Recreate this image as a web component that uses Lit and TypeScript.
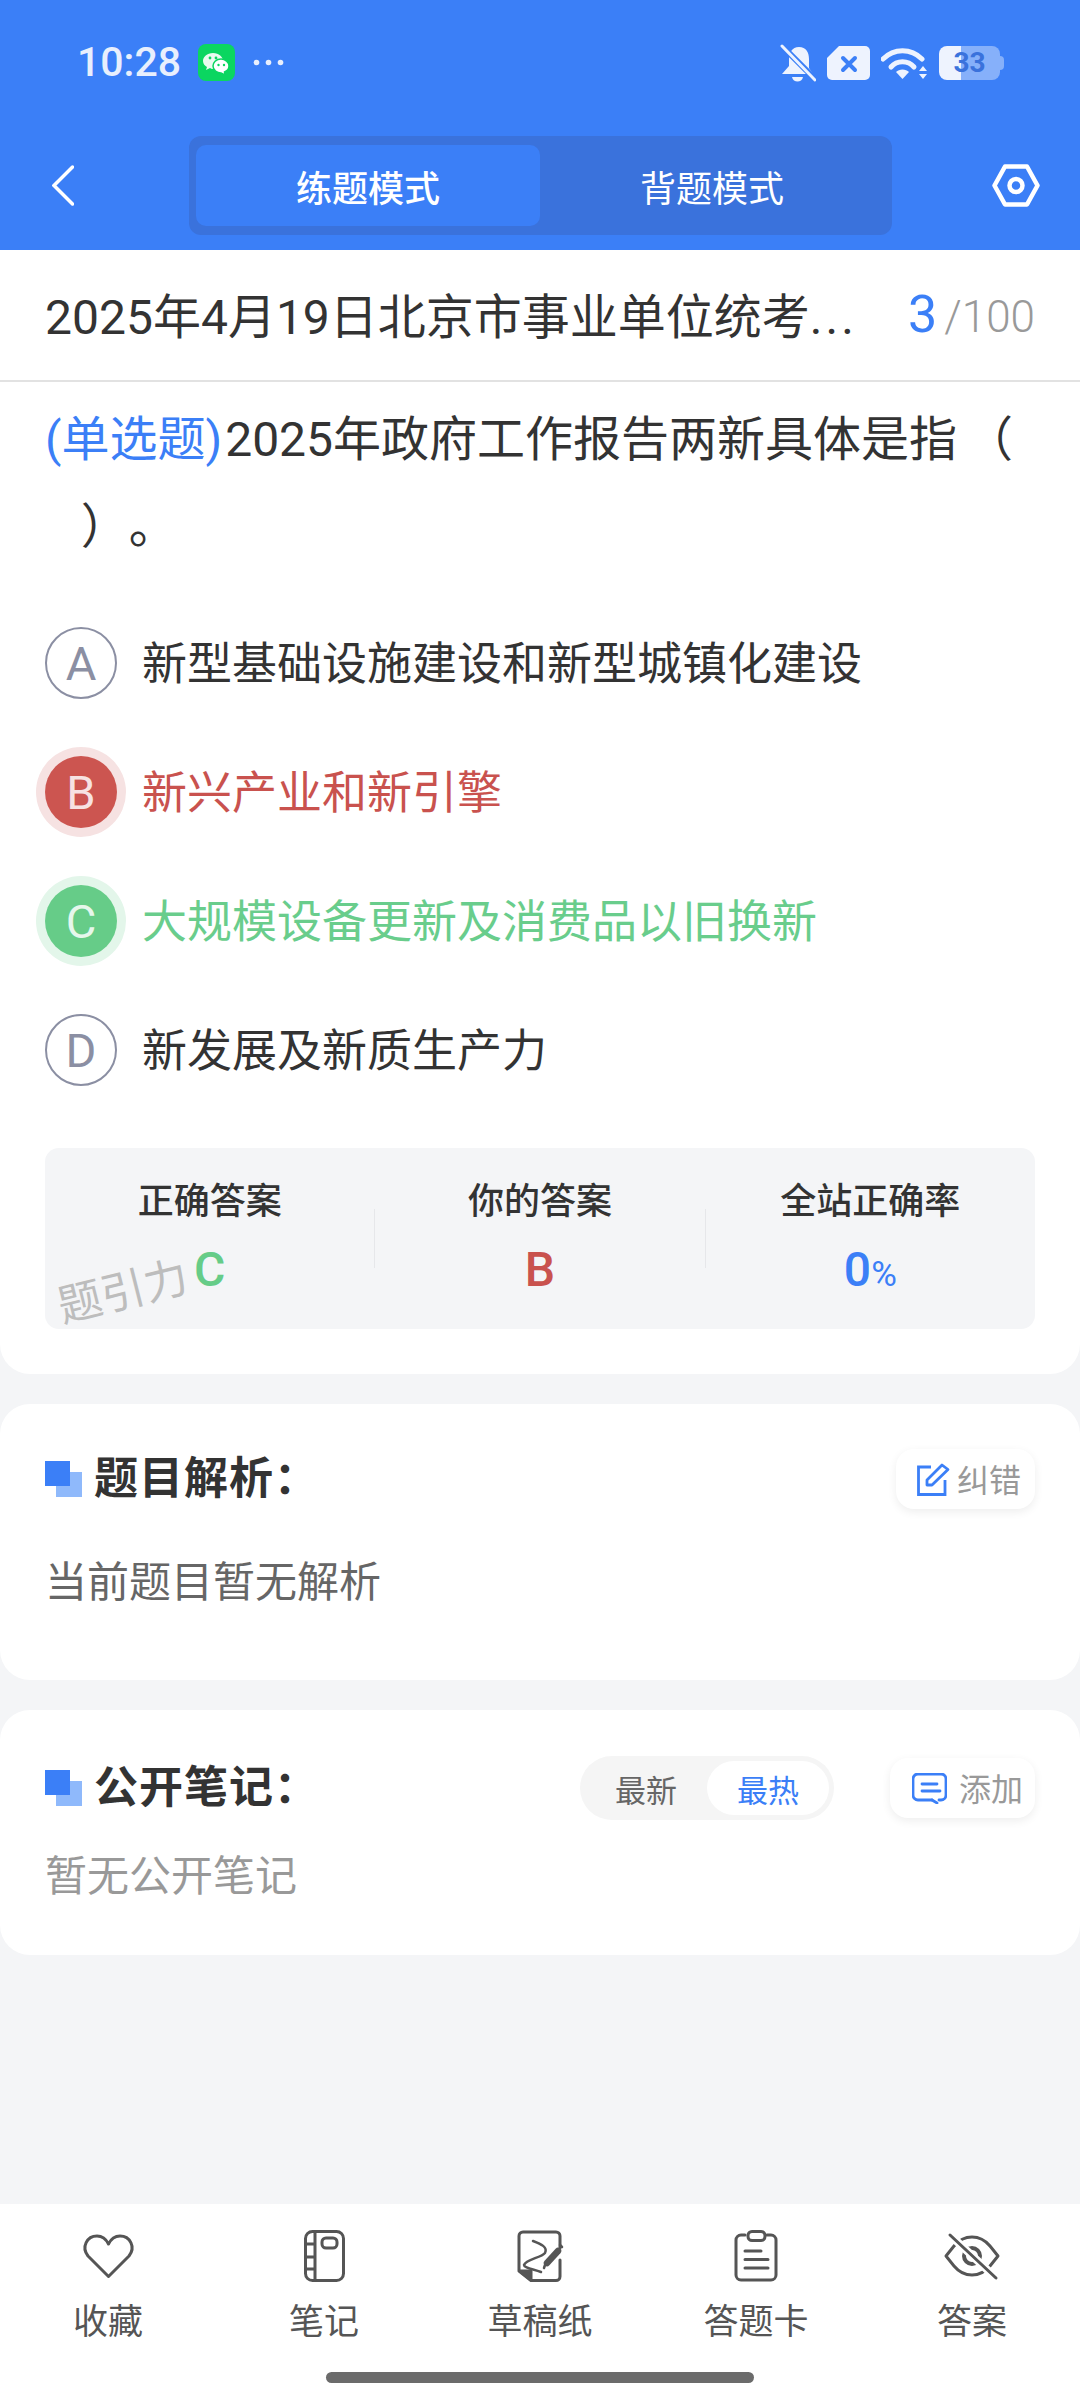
import { LitElement, css, html, svg } from 'lit';
import { customElement } from 'lit/decorators.js';

const options = [
  { key: 'A', text: '新型基础设施建设和新型城镇化建设', state: '' },
  { key: 'B', text: '新兴产业和新引擎', state: 'wrong' },
  { key: 'C', text: '大规模设备更新及消费品以旧换新', state: 'right' },
  { key: 'D', text: '新发展及新质生产力', state: '' },
];

const squares = html`<svg class="squares" width="37" height="36" viewBox="0 0 37 36">
  <rect x="11" y="11" width="26" height="25" fill="#8fb9fb"></rect>
  <rect x="0" y="0" width="25" height="25" fill="#3b7ff7"></rect>
</svg>`;

const tools = [
  {
    label: '收藏',
    w: 51,
    h: 45,
    icon: svg`<path d="M25.5 42.5 L5 22 C-2 13 4 2 14 2 C19 2 23 5 25.5 10 C28 5 32 2 37 2 C47 2 53 13 46 22 Z" />`,
  },
  {
    label: '笔记',
    w: 41,
    h: 52,
    icon: svg`<rect x="1.5" y="1.5" width="38" height="49" rx="7" />
      <path d="M11 2 V50 M2 14 H11 M2 27 H11 M2 39 H11" />
      <rect x="18" y="8" width="15" height="10" rx="4" />`,
  },
  {
    label: '草稿纸',
    w: 46,
    h: 52,
    icon: svg`<path d="M43 18 V6 a4 4 0 0 0 -4 -4 H6 a4 4 0 0 0 -4 4 V41 L14 50.5 H39 a4 4 0 0 0 4 -4 V30" />
      <path d="M3 41 H14 V50 Z" fill="#555" />
      <path stroke-width="2.5" d="M16 11 C24 14 31 17 28 23 C24 28 9 29 7 35 C7 38 16 39 24 42" />
      <path stroke-width="6.5" d="M30 33 L41 21" />
      <path stroke-width="2.5" d="M27 38 L28 35 M43 15 L45 17" />`,
  },
  {
    label: '答题卡',
    w: 44,
    h: 52,
    icon: svg`<path d="M11 5 H7 a5 5 0 0 0 -5 5 V45 a5 5 0 0 0 5 5 H37 a5 5 0 0 0 5 -5 V10 a5 5 0 0 0 -5 -5 H33" />
      <rect x="14" y="1.5" width="17" height="9" rx="4" />
      <path d="M11 21 H27 M11 29.5 H34 M11 38 H34" />`,
  },
  {
    label: '答案',
    w: 56,
    h: 45,
    icon: svg`<path d="M2 22 L10 12 C20 0 36 0 46 12 L54 22 L46 32 C36 44 20 44 10 32 Z" />
      <circle cx="28" cy="22" r="8" stroke-width="4" />
      <path d="M6 1 L52 44" stroke="#fff" stroke-width="8" />
      <path d="M6 1 L52 44" />`,
  },
];

@customElement('app-root')
export class AppRoot extends LitElement {
  static styles = css`
    :host {
      display: block;
      width: 1080px;
      height: 2400px;
      overflow: hidden;
      font-family: Roboto, 'Noto Sans CJK SC', sans-serif;
      color: #333;
    }
    .page {
      display: flex;
      flex-direction: column;
      height: 2400px;
      background: #f4f5f7;
    }
    .header {
      background: #3b7ff7;
      height: 250px;
      color: #fff;
    }
    .status {
      display: flex;
      align-items: center;
      justify-content: space-between;
      height: 124px;
      padding: 0 76px 0 77px;
    }
    .status-left {
      display: flex;
      align-items: center;
    }
    .time {
      font-size: 41px;
      font-weight: 500;
      color: #e8effd;
      margin-right: 17px;
    }
    .dots {
      margin-left: 18px;
    }
    .status-right {
      display: flex;
      align-items: center;
      gap: 11px;
      margin-top: 2px;
    }
    .battery {
      display: flex;
      align-items: center;
      justify-content: center;
      position: relative;
      width: 61px;
      height: 34px;
      margin-right: 4px;
      border-radius: 8px;
      background: linear-gradient(90deg, #eef3fe 22px, #86b0fa 22px);
      color: #3a72dc;
      font-size: 28px;
      font-weight: 700;
      line-height: 34px;
    }
    .battery::after {
      content: '';
      position: absolute;
      right: -4px;
      top: 10px;
      width: 4px;
      height: 14px;
      border-radius: 0 4px 4px 0;
      background: #86b0fa;
    }
    .nav {
      display: flex;
      align-items: center;
      height: 123px;
      padding: 0 0 3px 52px;
    }
    .tabs {
      display: flex;
      width: 703px;
      height: 99px;
      box-sizing: border-box;
      margin-left: 115px;
      margin-right: 100px;
      padding: 9px 8px 9px 7px;
      border-radius: 12px;
      background: #3a72dc;
    }
    .tab {
      flex: 1;
      display: flex;
      align-items: center;
      justify-content: center;
      border-radius: 10px;
      font-size: 36px;
    }
    .tab.on {
      background: #3b7ff7;
      font-weight: 500;
    }
    .card {
      background: #fff;
      border-radius: 30px;
      margin-bottom: 30px;
    }
    .main {
      border-radius: 0 0 30px 30px;
      padding-bottom: 45px;
    }
    .title-row {
      display: flex;
      align-items: center;
      justify-content: space-between;
      box-sizing: border-box;
      height: 132px;
      padding: 0 45px 4px;
      border-bottom: 2px solid #e2e2e2;
    }
    .title {
      font-size: 48px;
      white-space: nowrap;
    }
    .title i {
      font-style: normal;
      letter-spacing: 3px;
    }
    .count {
      color: #999;
      font-size: 44px;
      font-weight: 300;
      padding-top: 2px;
    }
    .count b {
      color: #3b7ff7;
      font-size: 52px;
      font-weight: 400;
      margin-right: 7px;
    }
    .question {
      margin: 0;
      padding: 14px 45px 0;
      font-size: 48px;
      line-height: 87px;
      text-spacing-trim: space-all;
    }
    .question span {
      color: #3b7ff7;
      margin-right: 3px;
    }
    .question i {
      font-style: normal;
      margin-left: 8px;
    }
    .options {
      display: flex;
      flex-direction: column;
      gap: 57px;
      padding: 57px 45px 0;
    }
    .option {
      display: flex;
      align-items: center;
      gap: 25px;
      font-size: 45px;
      height: 72px;
    }
    .option-text {
      margin-bottom: 6px;
    }
    .letter {
      display: flex;
      align-items: center;
      justify-content: center;
      box-sizing: border-box;
      width: 72px;
      height: 72px;
      border: 2px solid #8b8fa3;
      border-radius: 50%;
      color: #8b8fa3;
      font-size: 47px;
      font-weight: 400;
    }
    .wrong {
      color: #c9524e;
    }
    .wrong .letter {
      background: #cc5550;
      border: 0;
      color: #f7e2e2;
      box-shadow: 0 0 0 9px #f6e2e2;
    }
    .right {
      color: #69cd8c;
    }
    .right .letter {
      background: #66cc88;
      border: 0;
      color: #e6f7ec;
      box-shadow: 0 0 0 9px #e3f6ea;
    }
    .stats {
      display: flex;
      align-items: center;
      position: relative;
      height: 181px;
      margin: 62px 45px 0;
      border-radius: 14px;
      background: #f4f5f7;
    }
    .stat {
      flex: 1;
      align-self: flex-start;
      text-align: center;
      padding-top: 32px;
    }
    .stat-label {
      font-size: 36px;
      font-weight: 500;
      line-height: 44px;
    }
    .stat-value {
      margin-top: 22px;
      font-size: 48px;
      font-weight: 500;
      line-height: 48px;
    }
    .stat-value small {
      font-size: 35px;
      font-weight: 400;
    }
    .green {
      color: #66cc88;
    }
    .red {
      color: #c9524e;
    }
    .blue {
      color: #3b7ff7;
    }
    .sep {
      width: 1px;
      height: 59px;
      background: #e6e7ea;
    }
    .mark {
      position: absolute;
      left: 12px;
      top: 116px;
      color: #bdbdbd;
      font-size: 44px;
      line-height: 56px;
      transform: rotate(-14deg);
    }
    .analysis {
      padding: 45px 45px 67px;
    }
    .notes {
      padding: 46px 45px 48px;
    }
    .head {
      display: flex;
      align-items: center;
    }
    .head h3 {
      margin: 0 auto 0 12px;
      font-size: 44px;
      font-weight: 700;
      line-height: 56px;
      letter-spacing: 1px;
    }
    .squares {
      flex: none;
    }
    .btn {
      display: flex;
      align-items: center;
      height: 60px;
      border-radius: 18px;
      background: #fff;
      box-shadow: 0 3px 10px rgba(0, 0, 0, 0.07);
      color: #999;
      font-size: 32px;
    }
    .btn span {
      margin-bottom: 3px;
    }
    .fix {
      gap: 7px;
      padding: 0 14px 0 21px;
    }
    .add {
      gap: 12px;
      padding: 0 12px 0 22px;
      margin-left: 56px;
    }
    .seg {
      display: flex;
      padding: 5px;
      border-radius: 32px;
      background: #f5f5f5;
    }
    .seg div {
      display: flex;
      align-items: center;
      justify-content: center;
      width: 122px;
      height: 54px;
      border-radius: 27px;
      color: #666;
      font-size: 31px;
    }
    .seg .on {
      background: #fff;
      color: #3b7ff7;
    }
    .body-text {
      margin: 44px 0 0;
      color: #666;
      font-size: 42px;
      line-height: 60px;
    }
    .empty {
      margin: 27px 0 0;
      color: #999;
      font-size: 42px;
      line-height: 60px;
    }
    .footer {
      margin-top: auto;
      height: 196px;
      box-sizing: border-box;
      padding-top: 25px;
      background: #fff;
    }
    .tools {
      display: grid;
      grid-template-columns: repeat(5, 1fr);
    }
    .tool {
      display: flex;
      flex-direction: column;
      align-items: center;
      color: #555;
      font-size: 35px;
      line-height: 44px;
    }
    .tool-icon {
      display: flex;
      align-items: center;
      justify-content: center;
      height: 54px;
      margin-bottom: 18px;
    }
    .tool-icon svg {
      fill: none;
      stroke: #555;
      stroke-width: 3;
      stroke-linecap: round;
      stroke-linejoin: round;
      overflow: visible;
    }
    .home {
      width: 428px;
      height: 11px;
      margin: 27px auto 0;
      border-radius: 6px;
      background: #6b6b6b;
    }
  `;

  render() {
    return html`
      <div class="page">
        <div class="header">
          <div class="status">
            <div class="status-left">
              <span class="time">10:28</span>
              <svg width="37" height="37" viewBox="0 0 37 37">
                <rect width="37" height="37" rx="8" fill="#0bd660"></rect>
                <path d="M15 9 C9 9 5 13 5 17 C5 20 7 22 9 23 L8 26 L12 24 C13 25 15 25 16 25 C20 25 25 21 25 17 C25 13 21 9 15 9Z" fill="#eafbf0"></path>
                <path d="M23 15 C18 15 15 18.500 15 22 C15 26 19 29 23 29 L27 31 L26.500 28 C29 27 31 25 31 22 C31 18.500 27.500 15 23 15Z" fill="#fff" stroke="#0bd660" stroke-width="1.500"></path>
                <circle cx="12" cy="14" r="1.400" fill="#0bd660"></circle>
                <circle cx="18" cy="14" r="1.400" fill="#0bd660"></circle>
                <circle cx="20.500" cy="21" r="1.200" fill="#0bd660"></circle>
                <circle cx="26" cy="21" r="1.200" fill="#0bd660"></circle>
              </svg>
              <svg class="dots" width="31" height="7" viewBox="0 0 31 7" fill="#e8effd">
                <circle cx="3.500" cy="3.500" r="2.800"></circle>
                <circle cx="15.500" cy="3.500" r="2.800"></circle>
                <circle cx="27.500" cy="3.500" r="2.800"></circle>
              </svg>
            </div>
            <div class="status-right">
              <svg width="36" height="39" viewBox="0 0 36 39" fill="#eef3fe">
                <path d="M19 3 C12 3 9 9 9 15 V22 L2 30 H33 L29 24 V15 C29 8 26 3 19 3Z"></path>
                <path d="M12 33 H23 C22 39 13 39 12 33Z"></path>
                <path d="M1 1 L35 35" stroke="#3b7ff7" stroke-width="6"></path>
                <path d="M2 2 L35 36" stroke="#eef3fe" stroke-width="3" stroke-linecap="round"></path>
              </svg>
              <svg width="43" height="34" viewBox="0 0 43 34">
                <path d="M12 0 H38 a5 5 0 0 1 5 5 V29 a5 5 0 0 1 -5 5 H5 a5 5 0 0 1 -5 -5 V12Z" fill="#eef3fe"></path>
                <path d="M16 12 L28 24 M28 12 L16 24" stroke="#3b7ff7" stroke-width="4" stroke-linecap="round"></path>
              </svg>
              <svg width="47" height="33" viewBox="0 0 47 33" fill="#eef3fe">
                <path d="M2 12 C13 1 30 1 41 12" fill="none" stroke="#eef3fe" stroke-width="5" stroke-linecap="round"></path>
                <path d="M10 20 C16 13 27 13 33 20" fill="none" stroke="#eef3fe" stroke-width="5" stroke-linecap="round"></path>
                <path d="M15 25 C18 21.500 25 21.500 28 25 L21.500 32Z"></path>
                <path d="M38 24 L42 19 L46 24Z M38 27 H46 L42 32Z"></path>
              </svg>
              <div class="battery">33</div>
            </div>
          </div>
          <div class="nav">
            <svg width="22" height="41" viewBox="0 0 22 41" fill="none" stroke="#fff" stroke-width="3.500" stroke-linecap="round">
              <path d="M20.500 2 L2 20.500 L20.500 39"></path>
            </svg>
            <div class="tabs">
              <div class="tab on">练题模式</div>
              <div class="tab">背题模式</div>
            </div>
            <svg width="48" height="43" viewBox="0 0 48 43" fill="none" stroke="#fff" stroke-width="4.500" stroke-linejoin="round">
              <path d="M13 2.500 H35 L45.500 21.500 L35 40.500 H13 L2.500 21.500Z"></path>
              <circle cx="24" cy="21.500" r="6.500"></circle>
            </svg>
          </div>
        </div>

        <div class="card main">
          <div class="title-row">
            <div class="title">2025年4月19日北京市事业单位统考<i>...</i></div>
            <div class="count"><b>3</b>/100</div>
          </div>
          <p class="question">
            <span>(单选题)</span>2025年政府工作报告两新具体是指<i>（</i><br />&nbsp;&nbsp;&nbsp;）。
          </p>
          <div class="options">
            ${options.map(
              (o) => html`<div class="option ${o.state}">
                <div class="letter">${o.key}</div>
                <div class="option-text">${o.text}</div>
              </div>`
            )}
          </div>
          <div class="stats">
            <div class="stat">
              <div class="stat-label">正确答案</div>
              <div class="stat-value green">C</div>
            </div>
            <div class="sep"></div>
            <div class="stat">
              <div class="stat-label">你的答案</div>
              <div class="stat-value red">B</div>
            </div>
            <div class="sep"></div>
            <div class="stat">
              <div class="stat-label">全站正确率</div>
              <div class="stat-value blue">0<small>%</small></div>
            </div>
            <div class="mark">题引力</div>
          </div>
        </div>

        <div class="card analysis">
          <div class="head">
            ${squares}
            <h3>题目解析：</h3>
            <div class="btn fix">
              <svg width="33" height="33" viewBox="0 0 33 33" fill="none" stroke="#3b7ff7" stroke-width="2.800">
                <path d="M14 4 H1.500 V31.500 H28 V17"></path>
                <path d="M10 17 L25 2 L31 6.500 L15 22 H10Z" stroke-linejoin="round"></path>
              </svg>
              <span>纠错</span>
            </div>
          </div>
          <div class="body-text">当前题目暂无解析</div>
        </div>

        <div class="card notes">
          <div class="head">
            ${squares}
            <h3>公开笔记：</h3>
            <div class="seg">
              <div>最新</div>
              <div class="on">最热</div>
            </div>
            <div class="btn add">
              <svg width="35" height="31" viewBox="0 0 35 31" fill="none" stroke="#3b7ff7" stroke-width="2.800" stroke-linecap="round" stroke-linejoin="round">
                <path d="M20 27 H6 a5 5 0 0 1 -5 -5 V6 a5 5 0 0 1 5 -5 H29 a5 5 0 0 1 5 5 V22 a5 5 0 0 1 -5 5 H27"></path>
                <path d="M20 27 L25 30 M10 11 H25 M10 18 H28"></path>
              </svg>
              <span>添加</span>
            </div>
          </div>
          <div class="empty">暂无公开笔记</div>
        </div>

        <div class="footer">
          <div class="tools">
            ${tools.map(
              (t) => html`<div class="tool">
                <div class="tool-icon">
                  <svg width=${t.w} height=${t.h} viewBox="0 0 ${t.w} ${t.h}">${t.icon}</svg>
                </div>
                <div>${t.label}</div>
              </div>`
            )}
          </div>
          <div class="home"></div>
        </div>
      </div>
    `;
  }
}
